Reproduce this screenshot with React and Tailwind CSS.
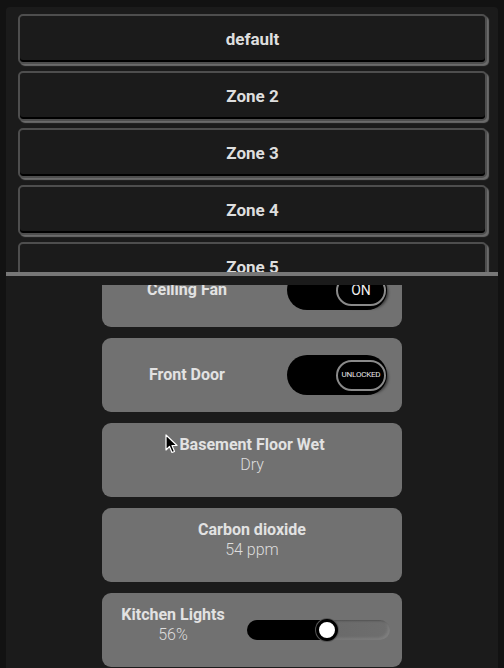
import React from "react";

const zones = ["default", "Zone 2", "Zone 3", "Zone 4", "Zone 5"];

function Toggle({ label, small }) {
  return (
    <div className="w-[100px] h-[40px] rounded-full bg-black flex items-center justify-end pr-[1px]">
      <div className="w-[50px] h-[31px] rounded-full border-2 border-[#8a8a8a] bg-black shadow-[2px_2px_3px_rgba(0,0,0,0.6)] flex items-center justify-center">
        <span className={small ? "text-[8px] text-[#e6e6e6] tracking-tight" : "text-[14px] text-[#eeeeee]"}>{label}</span>
      </div>
    </div>
  );
}

function SwitchCard({ title, state, small }) {
  return (
    <div className="h-[74px] shrink-0 rounded-[9px] bg-[#717171] flex items-center pr-[15px]">
      <div className="flex-1 mr-[15px] text-center text-[16px] font-bold text-[#e2e2e2]">{title}</div>
      <Toggle label={state} small={small} />
    </div>
  );
}

function SensorCard({ title, value }) {
  return (
    <div className="h-[74px] shrink-0 rounded-[9px] bg-[#717171] flex flex-col items-center pt-[12px]">
      <div className="text-[16px] leading-[20px] font-bold text-[#e2e2e2]">{title}</div>
      <div className="text-[16px] leading-[20px] font-light text-[#dddddd]">{value}</div>
    </div>
  );
}

function SliderCard({ title, value }) {
  const knob = Math.round((value / 100) * 143);
  return (
    <div className="h-[74px] shrink-0 rounded-[9px] bg-[#717171] flex items-center pr-[12px]">
      <div className="w-[142px] flex flex-col items-center mb-[10px]">
        <div className="text-[16px] leading-[20px] font-bold text-[#e2e2e2]">{title}</div>
        <div className="text-[16px] leading-[20px] font-light text-[#dddddd]">{value}%</div>
      </div>
      <div className="ml-auto relative w-[143px] h-[20px] rounded-full bg-gradient-to-r from-[#646464] to-[#6e6e6e] shadow-[inset_-2px_-2px_3px_rgba(255,255,255,0.12),inset_1px_1px_2px_rgba(0,0,0,0.25)]">
        <div className="absolute left-0 top-0 h-full rounded-full bg-black" style={{ width: knob + 8 + "px" }} />
        <div className="absolute top-[-1px] w-[22px] h-[22px] rounded-full bg-white border-[3px] border-black ring-1 ring-[#555]" style={{ left: knob - 11 + "px" }} />
      </div>
    </div>
  );
}

export default function App() {
  return (
    <div className="h-[668px] bg-[#121212] px-[6px] pt-[7px] flex flex-col overflow-hidden" style={{ fontFamily: "Roboto, 'Noto Sans', sans-serif" }}>
      <div className="h-[265px] shrink-0 bg-[#1b1b1b] rounded-t-[4px] overflow-hidden pl-[12px] pr-[11px] pt-[7px] flex flex-col gap-[7px]">
        {zones.map((z) => (
          <div
            key={z}
            className="h-[50px] shrink-0 rounded-[5px] border-2 border-[#4e4e4e] bg-[#1b1b1b] shadow-[2px_2px_1px_#6b6b6b,inset_0_-2px_0_#000] flex items-center justify-center pt-[1px] text-[17px] font-bold text-[#dedede]"
          >
            {z}
          </div>
        ))}
      </div>
      <div className="h-[4px] shrink-0 bg-[#777777]" />
      <div className="flex-1 bg-[#1b1b1b] pt-[9px] pb-[4px] flex flex-col">
        <div className="relative flex-1 overflow-hidden">
          <div className="w-[300px] mx-auto -mt-[32px] flex flex-col gap-[11px]">
            <SwitchCard title="Ceiling Fan" state="ON" />
            <SwitchCard title="Front Door" state="UNLOCKED" small />
            <SensorCard title="Basement Floor Wet" value="Dry" />
            <SensorCard title="Carbon dioxide" value="54 ppm" />
            <SliderCard title="Kitchen Lights" value={56} />
          </div>
          <svg className="absolute left-[159px] top-[149px]" width="14" height="20" viewBox="0 0 14 20">
            <path d="M1 1 L1 16 L4.5 12.5 L7 18.5 L9.5 17.5 L7 11.5 L12 11.5 Z" fill="#000" stroke="#fff" strokeWidth="1.2" strokeLinejoin="round" />
          </svg>
        </div>
      </div>
    </div>
  );
}
